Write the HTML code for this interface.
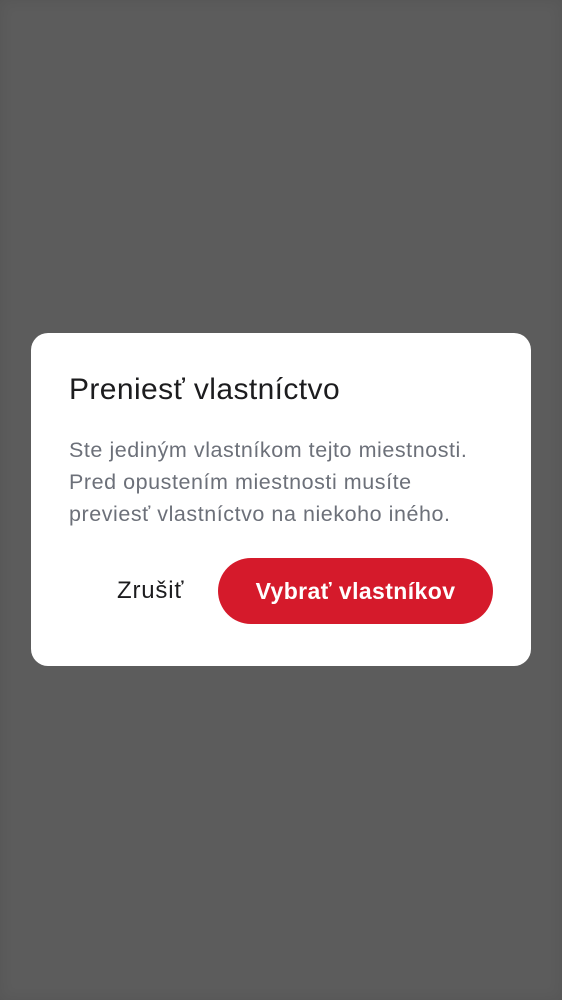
<!DOCTYPE html>
<html><head><meta charset="utf-8"><style>
html,body{margin:0;padding:0;width:562px;height:1000px;overflow:hidden;background:#5c5c5c;font-family:"Liberation Sans",sans-serif;}
.shade{position:absolute;left:0;top:0;width:562px;height:1000px;box-shadow:inset 0 0 14px rgba(0,0,0,0.08);}
.dlg{position:absolute;left:31px;top:333px;width:500px;height:333px;background:#fff;border-radius:17px;}
.t{position:absolute;left:38px;top:40px;font-size:30px;color:#1c1c1e;white-space:nowrap;letter-spacing:0.4px;}
.b{position:absolute;left:38px;top:101px;font-size:21.5px;line-height:32px;color:#6c7079;width:460px;letter-spacing:0.55px;white-space:nowrap;}
.c{position:absolute;left:86px;top:244px;font-size:24px;color:#1c1c1e;letter-spacing:0.8px;}
.btn{position:absolute;left:187px;top:225px;width:275px;height:66px;border-radius:33px;background:#d51a2b;color:#fff;font-size:23px;font-weight:bold;line-height:66px;text-align:center;letter-spacing:0.4px;}
</style></head><body>
<div class="shade"></div>
<div class="dlg">
<div class="t">Preniesť vlastníctvo</div>
<div class="b">Ste jediným vlastníkom tejto miestnosti.<br>Pred opustením miestnosti musíte<br>previesť vlastníctvo na niekoho iného.</div>
<div class="c">Zrušiť</div>
<div class="btn">Vybrať vlastníkov</div>
</div>
</body></html>
